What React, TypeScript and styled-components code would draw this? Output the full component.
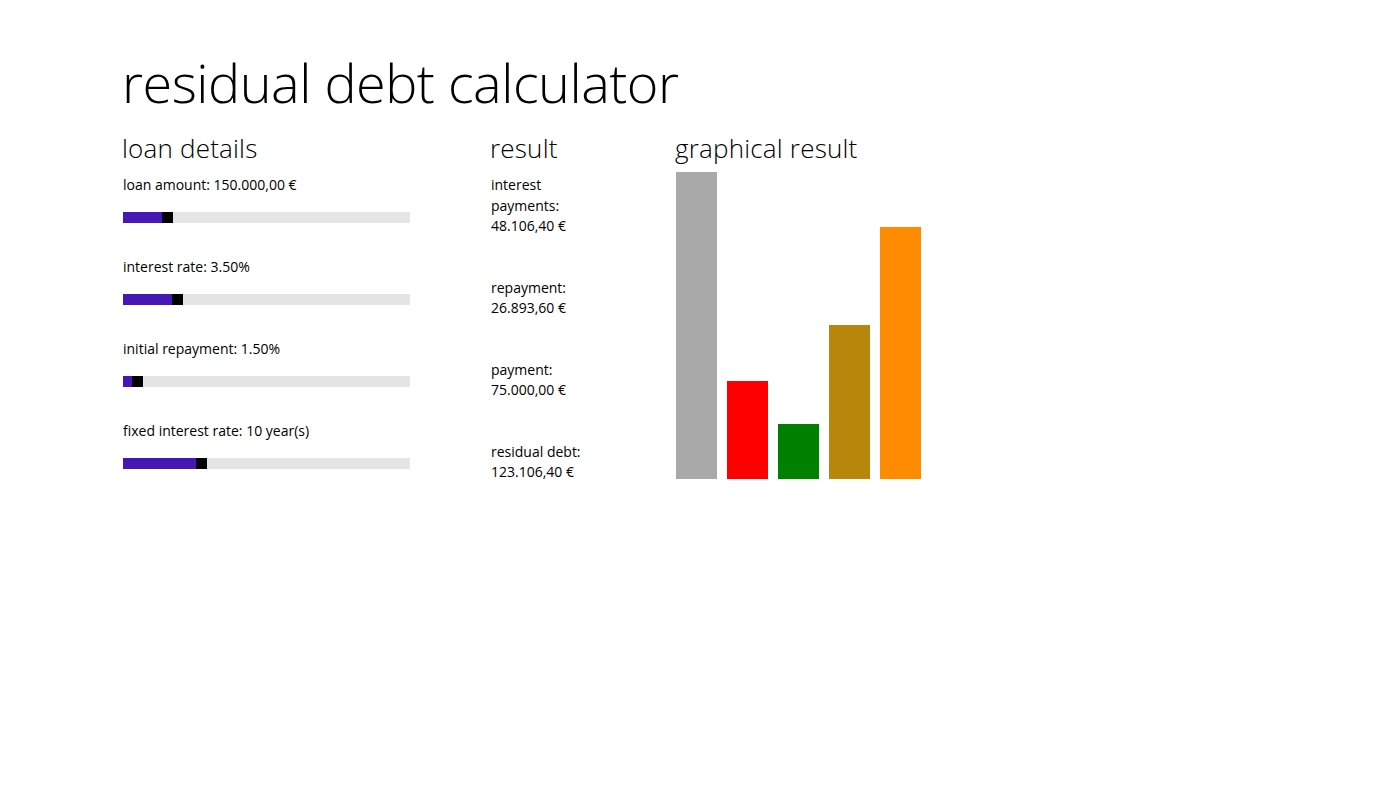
import React from "react"
import styled, { createGlobalStyle } from "styled-components"

const GlobalStyle = createGlobalStyle`
  html, body {
    margin: 0;
    padding: 0;
    background: #ffffff;
  }
  body {
    font-family: "Open Sans", "Noto Sans", "Liberation Sans", sans-serif;
    color: #000000;
  }
`

type Slider = { label: string; fill: number }

const sliders: Slider[] = [
  { label: "loan amount: 150.000,00 €", fill: 39 },
  { label: "interest rate: 3.50%", fill: 49 },
  { label: "initial repayment: 1.50%", fill: 9 },
  { label: "fixed interest rate: 10 year(s)", fill: 73 },
]

const results = [
  { label: "interest payments:", value: "48.106,40 €" },
  { label: "repayment:", value: "26.893,60 €" },
  { label: "payment:", value: "75.000,00 €" },
  { label: "residual debt:", value: "123.106,40 €" },
]

const bars = [
  { color: "#a9a9a9", height: 307 },
  { color: "#ff0000", height: 98 },
  { color: "#008000", height: 55 },
  { color: "#b8860b", height: 154 },
  { color: "#ff8c00", height: 252 },
]

export default function App() {
  return (
    <>
      <GlobalStyle />
      <Page>
        <Title>residual debt calculator</Title>
        <Columns>
          <LoanColumn>
            <SubHeader>loan details</SubHeader>
            <SliderList>
              {sliders.map((s) => (
                <SliderBlock key={s.label}>
                  <Label>{s.label}</Label>
                  <Track>
                    <Fill style={{ width: s.fill }} />
                    <Thumb />
                  </Track>
                </SliderBlock>
              ))}
            </SliderList>
          </LoanColumn>
          <ResultColumn>
            <SubHeader>result</SubHeader>
            <ResultList>
              {results.map((r) => (
                <ResultItem key={r.label}>
                  {r.label}
                  <br />
                  {r.value}
                </ResultItem>
              ))}
            </ResultList>
          </ResultColumn>
          <GraphColumn>
            <SubHeader>graphical result</SubHeader>
            <Chart>
              {bars.map((b) => (
                <Bar key={b.color} $color={b.color} style={{ height: b.height }} />
              ))}
            </Chart>
          </GraphColumn>
        </Columns>
      </Page>
    </>
  )
}

const Page = styled.div`
  padding: 42px 0 0 120px;
  min-height: 787px;
  box-sizing: border-box;
`

const Title = styled.h1`
  margin: 0 0 0 2px;
  font-size: 54px;
  font-weight: 300;
  line-height: 80px;
  letter-spacing: -0.5px;
`

const Columns = styled.div`
  display: flex;
  margin-top: 10px;
`

const SubHeader = styled.h2`
  margin: 0 0 0 2px;
  font-size: 26px;
  font-weight: 300;
  line-height: 32px;
  height: 38px;
  letter-spacing: 0.2px;
`

const LoanColumn = styled.section`
  width: 368px;
`

const SliderList = styled.div`
  padding-top: 5px;
`

const SliderBlock = styled.div`
  height: 82px;
  margin-left: 3px;
`

const Label = styled.div`
  font-size: 14px;
  line-height: 20px;
  height: 37px;
`

const Track = styled.div`
  display: flex;
  width: 287px;
  height: 11px;
  background: #e5e5e5;
`

const Fill = styled.div`
  background: #4617b4;
`

const Thumb = styled.div`
  width: 11px;
  background: #000000;
`

const ResultColumn = styled.section`
  width: 185px;
`

const ResultList = styled.div`
  padding-top: 5px;
`

const ResultItem = styled.div`
  max-width: 105px;
  margin: 0 0 41px 3px;
  font-size: 14px;
  line-height: 20.5px;
`

const GraphColumn = styled.section``

const Chart = styled.div`
  display: flex;
  align-items: flex-end;
  gap: 10px;
  height: 307px;
  margin: 2px 0 0 3px;
`

const Bar = styled.div<{ $color: string }>`
  width: 41px;
  background: ${(p) => p.$color};
`
